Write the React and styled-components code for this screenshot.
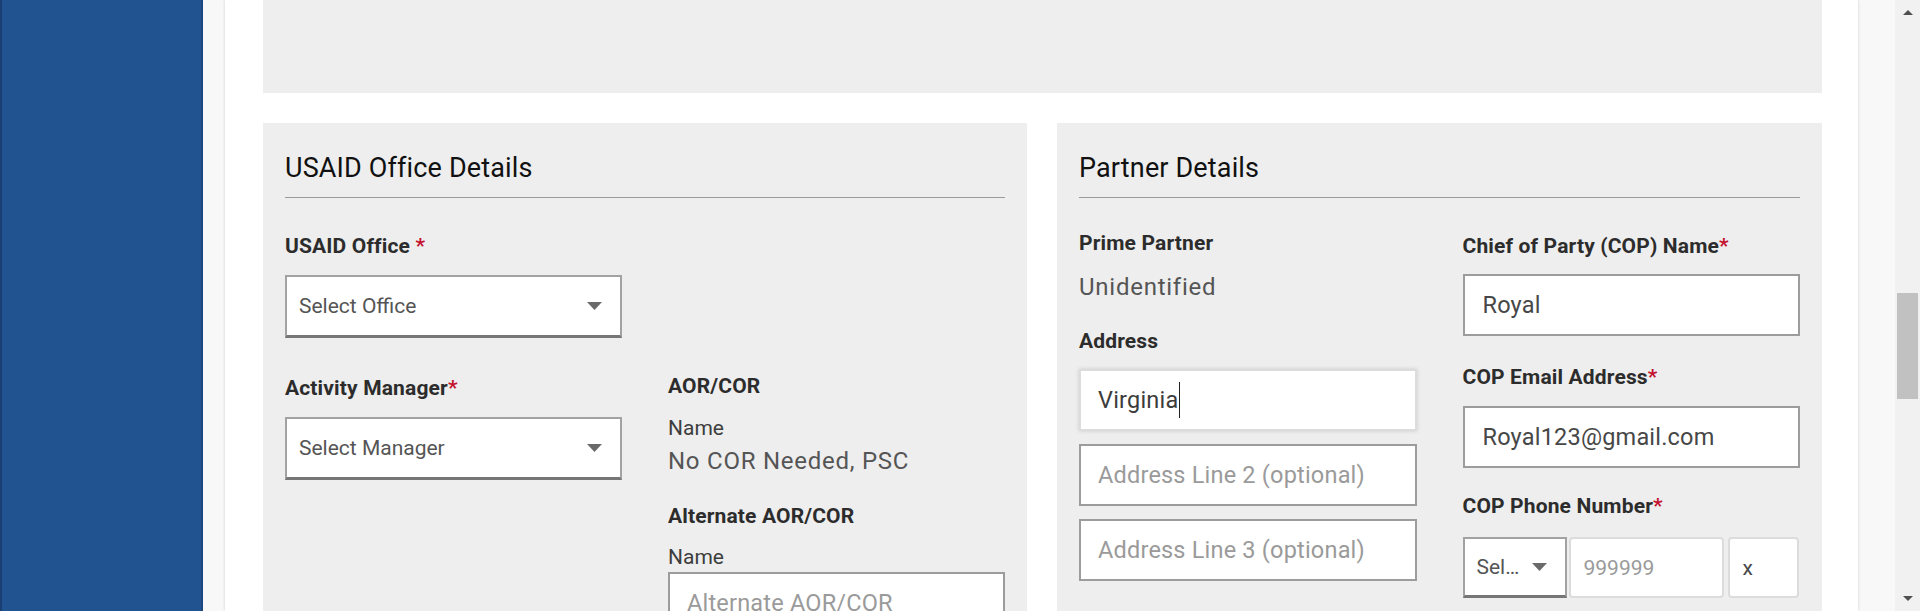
import React from 'react';
import styled, { createGlobalStyle } from 'styled-components';

const GlobalStyle = createGlobalStyle`
  * { box-sizing: border-box; }
  html, body { margin: 0; padding: 0; height: 100%; overflow: hidden; }
  body { font-family: Roboto, "Liberation Sans", Arial, sans-serif; background: #f8f8f8; }
  #root { height: 100%; }
`;

const Shell = styled.div`
  display: flex;
  width: 1920px;
  height: 611px;
  overflow: hidden;
`;

const Sidebar = styled.aside`
  flex: none;
  width: 203px;
  background: #215391;
  border-left: 2px solid #1a3f73;
  border-right: 2px solid #1b4682;
`;

const Gutter = styled.div`
  flex: none;
  width: ${(p) => p.$w}px;
  background: #f8f8f8;
`;

const Card = styled.main`
  flex: none;
  width: 1633px;
  background: #fff;
  box-shadow: 0 0 3px rgba(0, 0, 0, 0.16);
  padding: 0 36px 0 38px;
  position: relative;
  z-index: 1;
  overflow: hidden;
`;

const TopPanel = styled.section`
  height: 93px;
  background: #eeeeee;
`;

const PanelRow = styled.div`
  display: grid;
  grid-template-columns: 764px 765px;
  column-gap: 30px;
  margin-top: 30px;
`;

const Panel = styled.section`
  background: #eeeeee;
  padding: 29px 22px 60px;
  min-height: 520px;
`;

const PanelTitle = styled.h2`
  margin: 0;
  font-size: 27px;
  line-height: 32px;
  font-weight: 400;
  letter-spacing: 0.15px;
  color: #111;
  padding-bottom: 13px;
  border-bottom: 1px solid #9b9b9b;
`;

const TwoCols = styled.div`
  display: grid;
  grid-template-columns: 1fr 1fr;
  column-gap: 46px;
  row-gap: ${(p) => p.$rowGap || 0}px;
  padding-top: 35px;
  align-items: start;
`;

const Column = styled.div`
  display: flex;
  flex-direction: column;
  margin-top: ${(p) => p.$mt || 0}px;
`;

const Label = styled.div`
  font-size: 21px;
  line-height: 25px;
  font-weight: 700;
  letter-spacing: 0.15px;
  color: #2c2c2c;
  padding-top: 1px;
  margin-top: ${(p) => p.$mt || 0}px;
  margin-bottom: ${(p) => (p.$mb === undefined ? 16 : p.$mb)}px;
`;

const Required = styled.span`
  color: #c4122f;
`;

const SubLabel = styled.div`
  font-size: 21px;
  line-height: 25px;
  color: #3d3d3d;
  padding-top: 1px;
  margin-top: ${(p) => p.$mt || 0}px;
`;

const Value = styled.div`
  font-size: 24px;
  line-height: 28px;
  letter-spacing: 0.75px;
  color: #555;
  padding-top: 1px;
  margin-top: ${(p) => p.$mt || 0}px;
`;

const SelectBox = styled.div`
  display: flex;
  align-items: center;
  justify-content: space-between;
  height: ${(p) => p.$h || 63}px;
  width: ${(p) => (p.$w ? `${p.$w}px` : '100%')};
  flex: none;
  background: #fff;
  border: 2px solid #a2a2a2;
  border-bottom: 3px solid #767676;
  padding: 0 18px 0 12px;
  font-size: 21px;
  color: #555;
`;

const SelectText = styled.span`
  white-space: nowrap;
  overflow: hidden;
  text-overflow: ellipsis;
  max-width: ${(p) => (p.$max ? `${p.$max}px` : 'none')};
`;

const Caret = () => (
  <svg width="15" height="8" viewBox="0 0 15 8" aria-hidden="true">
    <path d="M0 0 L15 0 L7.5 8 Z" fill="#6a6a6a" />
  </svg>
);

const TextInput = styled.input`
  display: block;
  width: ${(p) => (p.$w ? `${p.$w}px` : '100%')};
  flex: none;
  height: ${(p) => p.$h || 62}px;
  margin: 0;
  margin-top: ${(p) => p.$mt || 0}px;
  background: #fff;
  border: 2px solid ${(p) => (p.$soft ? '#dcdcdc' : '#9c9c9c')};
  border-radius: ${(p) => (p.$soft ? 4 : 0)}px;
  padding: 0 ${(p) => p.$pad || 17}px;
  font-family: inherit;
  font-size: ${(p) => p.$fs || 23.5}px;
  letter-spacing: ${(p) => (p.$fs ? 0 : 0.2)}px;
  color: #474747;
  outline: none;
  &::placeholder {
    color: #9a9a9a;
    opacity: 1;
  }
`;

const FocusedBox = styled.div`
  display: flex;
  align-items: center;
  height: 62px;
  background: #fff;
  border: 2px solid #dcdcdc;
  box-shadow: 0 0 4px rgba(0, 0, 0, 0.14);
  padding: 0 17px;
  font-size: 23.5px;
  letter-spacing: 0.2px;
  color: #3c3c3c;
  margin-top: ${(p) => p.$mt || 0}px;
`;

const TextCaret = styled.span`
  display: inline-block;
  width: 1px;
  height: 36px;
  background: #222;
  margin-left: 1px;
`;

const PhoneRow = styled.div`
  display: flex;
  align-items: stretch;
  height: 61px;
`;

const PhoneGap = styled.div`
  flex: none;
  width: ${(p) => p.$w}px;
`;

const ScrollBar = styled.div`
  flex: none;
  width: 25px;
  background: #f1f1f1;
  display: flex;
  flex-direction: column;
  align-items: center;
`;

const ScrollArrow = styled.div`
  flex: none;
  height: 25px;
  display: flex;
  align-items: center;
  justify-content: center;
  &::before {
    content: '';
    border-left: 5.5px solid transparent;
    border-right: 5.5px solid transparent;
    ${(p) => (p.$down ? 'border-top' : 'border-bottom')}: 5px solid #505050;
  }
`;

const ScrollTrack = styled.div`
  flex: 1;
  width: 100%;
  display: flex;
  flex-direction: column;
  align-items: center;
`;

const ScrollThumb = styled.div`
  width: 21px;
  height: 106px;
  background: #c1c1c1;
  margin-top: ${(p) => p.$top}px;
`;

export default function App() {
  return (
    <>
      <GlobalStyle />
      <Shell>
        <Sidebar />
        <Gutter $w={22} />
        <Card>
          <TopPanel />
          <PanelRow>
            <Panel>
              <PanelTitle>USAID Office Details</PanelTitle>
              <TwoCols $rowGap={37}>
                <Column>
                  <Label>
                    USAID Office <Required>*</Required>
                  </Label>
                  <SelectBox>
                    <SelectText>Select Office</SelectText>
                    <Caret />
                  </SelectBox>
                </Column>
                <div />
                <Column>
                  <Label>
                    Activity Manager<Required>*</Required>
                  </Label>
                  <SelectBox $h={63}>
                    <SelectText>Select Manager</SelectText>
                    <Caret />
                  </SelectBox>
                </Column>
                <Column $mt={-2}>
                  <Label $mb={0}>AOR/COR</Label>
                  <SubLabel $mt={16}>Name</SubLabel>
                  <Value $mt={5}>No COR Needed, PSC</Value>
                  <Label $mt={28} $mb={0}>Alternate AOR/COR</Label>
                  <SubLabel $mt={15}>Name</SubLabel>
                  <TextInput $mt={2} placeholder="Alternate AOR/COR" readOnly />
                </Column>
              </TwoCols>
            </Panel>

            <Panel>
              <PanelTitle>Partner Details</PanelTitle>
              <TwoCols>
                <Column $mt={-3}>
                  <Label $mb={0}>Prime Partner</Label>
                  <Value $mt={16}>Unidentified</Value>
                  <Label $mt={27} $mb={0}>Address</Label>
                  <FocusedBox $mt={15}>
                    Virginia
                    <TextCaret />
                  </FocusedBox>
                  <TextInput $mt={13} placeholder="Address Line 2 (optional)" readOnly />
                  <TextInput $mt={13} placeholder="Address Line 3 (optional)" readOnly />
                </Column>
                <Column>
                  <Label $mb={15}>
                    Chief of Party (COP) Name<Required>*</Required>
                  </Label>
                  <TextInput defaultValue="Royal" readOnly $pad={18} />
                  <Label $mt={28}>
                    COP Email Address<Required>*</Required>
                  </Label>
                  <TextInput defaultValue="Royal123@gmail.com" readOnly $pad={18} />
                  <Label $mt={25} $mb={18}>
                    COP Phone Number<Required>*</Required>
                  </Label>
                  <PhoneRow>
                    <SelectBox $w={104} $h={61}>
                      <SelectText $max={46}>Select</SelectText>
                      <Caret />
                    </SelectBox>
                    <PhoneGap $w={2} />
                    <TextInput $soft $w={155} $h={61} $fs={21} $pad={13} placeholder="999999" readOnly />
                    <PhoneGap $w={4} />
                    <TextInput $soft $w={71} $h={61} $fs={21} $pad={13} defaultValue="x" readOnly />
                  </PhoneRow>
                </Column>
              </TwoCols>
            </Panel>
          </PanelRow>
        </Card>
        <Gutter $w={37} />
        <ScrollBar>
          <ScrollArrow />
          <ScrollTrack>
            <ScrollThumb $top={268} />
          </ScrollTrack>
          <ScrollArrow $down />
        </ScrollBar>
      </Shell>
    </>
  );
}
